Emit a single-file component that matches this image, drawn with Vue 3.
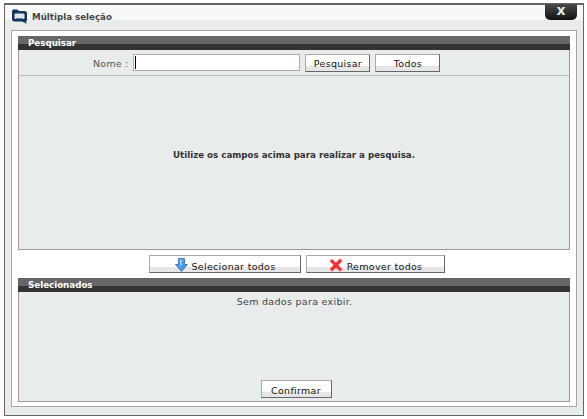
<script setup>
const title = 'Múltipla seleção'
</script>

<template>
  <div class="window">
    <header class="titlebar">
      <svg class="logo" width="17" height="16" viewBox="0 0 17 16">
        <path d="M1 2.500C1 1 2 .5 3 .5h3.500L8 2h5c2 0 3 1 3 2.500v6.500c0 1-.5 1.500-1.500 1.500l1.500 2.500-5-2.500H3.500C2 12.500 1 11.500 1 10z" fill="#16355c"/>
        <rect x="3.500" y="4.500" width="10" height="5.500" rx="1" fill="#dfe7ee"/>
        <rect x="5" y="9" width="7" height="1" fill="#6d87a3"/>
      </svg>
      <span class="title">{{ title }}</span>
      <button class="close">x</button>
    </header>
    <div class="panel">
      <section class="section">
        <h2 class="head"><span>Pesquisar</span></h2>
        <div class="box search-box">
          <div class="filter">
            <label class="label">Nome :</label>
            <div class="input"><i class="caret"></i></div>
            <button class="btn search">Pesquisar</button>
            <button class="btn all">Todos</button>
          </div>
          <div class="hint">Utilize os campos acima para realizar a pesquisa.</div>
        </div>
      </section>
      <div class="actions">
        <button class="btn wide">
          <svg width="13" height="14" viewBox="0 0 13 14"><path d="M3.500 .5h6v6h3l-6 7-6-7h3z" fill="#4a9ce6" stroke="#2a6fb8" stroke-width=".8" stroke-linejoin="round"/><path d="M5 1.500h1.500v6H5z" fill="#a9d4f7"/></svg>
          <span class="lower">Selecionar todos</span>
        </button>
        <button class="btn wide second">
          <svg width="14" height="14" viewBox="0 0 14 14"><path d="M.5 3 3 1l4 3.500L11 .5l2.500 2.500L9.500 7l4 4.500-2.500 2L7 10l-4 3.500-2.500-2.500L4.500 7z" fill="#e8333a" stroke="#f4b0b0" stroke-width=".6" stroke-linejoin="round"/></svg>
          <span class="lower">Remover todos</span>
        </button>
      </div>
      <section class="section">
        <h2 class="head"><span>Selecionados</span></h2>
        <div class="box selected-box">
          <p class="empty">Sem dados para exibir.</p>
          <button class="btn confirm">Confirmar</button>
        </div>
      </section>
    </div>
  </div>
</template>

<style>
html, body { margin: 0; background: #fff; }
</style>

<style scoped>
.window {
  box-sizing: border-box;
  width: 580px;
  height: 413px;
  margin: 3px 0 0 4px;
  border: 1px solid #666;
  border-top-width: 2px;
  background: #e9eced;
  display: flex;
  flex-direction: column;
  font-family: "DejaVu Sans", sans-serif;
  font-size: 9.500px;
  color: #333;
}
.titlebar {
  position: relative;
  height: 15px;
  flex: none;
  background: #f7f9f8;
  display: flex;
  align-items: flex-start;
  padding-left: 6px;
  gap: 4px;
}
.logo { flex: none; margin-top: 4px; }
.title { font-weight: 700; font-size: 8.700px; line-height: 12px; margin-top: 6px; color: #444; }
.close {
  position: absolute;
  right: 6px;
  top: -1px;
  width: 32px;
  height: 16px;
  padding: 0 0 3px;
  border: 0;
  border-radius: 0 0 5px 5px;
  background: linear-gradient(#4a4a4a, #111);
  color: #dfe9f2;
  font: 700 14px/13px "DejaVu Sans", sans-serif;
}
.panel {
  box-sizing: border-box;
  flex: 1;
  margin: 10px 6px 8px 6px;
  padding: 5px 6px 4px;
  background: #fff;
  border: 1px solid #a5a5a5;
  display: flex;
  flex-direction: column;
}
.section { display: flex; flex-direction: column; }
.section:last-child { flex: 1; }
.head {
  margin: 0;
  height: 14px;
  background: linear-gradient(#666 0 8px, #333 8px);
  color: #fff;
  font-size: 8.700px;
  font-weight: 700;
  line-height: 15px;
  padding-left: 10px;
}
.box {
  box-sizing: border-box;
  background: #e9eced;
  border: 1px solid #999;
  border-top: 0;
}
.search-box { height: 200px; display: flex; flex-direction: column; }
.filter {
  height: 26px;
  flex: none;
  box-sizing: border-box;
  border-bottom: 1px solid #bbb;
  display: flex;
  align-items: center;
  padding-left: 74px;
}
.label { letter-spacing: .2px; color: #555; margin-right: 5px; padding-top: 2px; }
.input {
  box-sizing: border-box;
  width: 167px;
  height: 17px;
  background: #fff;
  border: 1px solid #aaa;
  padding: 1px 1px;
  margin-right: 5px;
}
.caret { display: block; width: 1px; height: 13px; background: #000; }
.btn {
  box-sizing: border-box;
  height: 18px;
  padding: 1px 0 0;
  border: 1px solid;
  border-color: #aaa #666 #666 #aaa;
  background: linear-gradient(#fff 0 11px, #e6e6e6 11px);
  color: #111;
  font: 9.500px "DejaVu Sans", sans-serif;
  letter-spacing: .3px;
  display: inline-flex;
  align-items: center;
  justify-content: center;
  gap: 4px;
}
.search { width: 65px; margin-right: 5px; }
.all { width: 65px; }
.hint {
  flex: 1;
  display: flex;
  align-items: center;
  justify-content: center;
  font-size: 8.700px;
  font-weight: 700;
  color: #333;
  padding-bottom: 16px;
}
.actions {
  height: 28px;
  flex: none;
  display: flex;
  align-items: center;
  justify-content: center;
  gap: 5px;
  padding-left: 6px;
}
.wide { width: 152px; height: 18px; padding-top: 2px; }
.lower { padding-top: 2px; }
.second { width: 139px; }
.selected-box {
  flex: 1;
  display: flex;
  flex-direction: column;
  align-items: center;
  justify-content: space-between;
  padding: 4px 0 3px 4px;
}
.empty { margin: 0 3px 0 0; letter-spacing: .3px; color: #444; }
.confirm { width: 71px; padding-top: 2px; }
</style>
